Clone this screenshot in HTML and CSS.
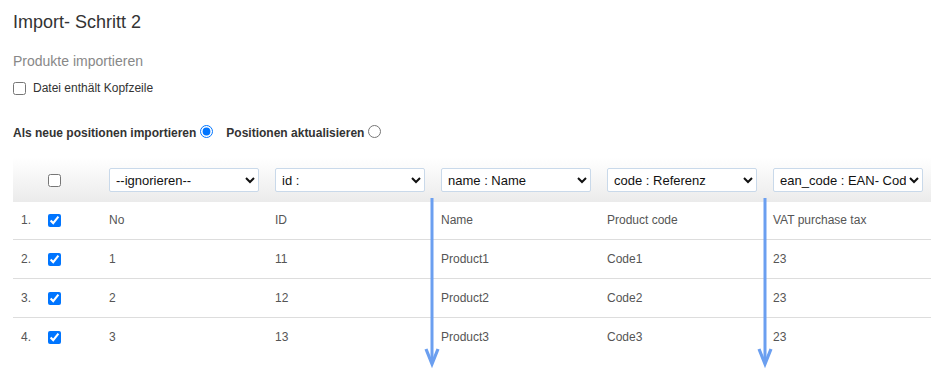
FILE: index.html
```html
<!DOCTYPE html>
<html>
<head>
    <title>Import</title>
    <link rel="stylesheet" href="styles.css">
</head>
<body>
    <div class="page">
        <h1 class="title">Import- Schritt 2</h1>
        <h2 class="subtitle">Produkte importieren</h2>
        <label class="headline"><input type="checkbox"> Datei enthält Kopfzeile</label>
        <div class="mode">
            <label>Als neue positionen importieren <input type="radio" name="mode" checked></label>
            <label>Positionen aktualisieren <input type="radio" name="mode"></label>
        </div>
        <div class="grid-wrap">
            <table class="grid">
                <thead>
                    <tr>
                        <th class="num"></th>
                        <th class="chk"><input type="checkbox"></th>
                        <th><select><option>--ignorieren--</option></select></th>
                        <th><select><option>id :</option></select></th>
                        <th><select><option>name : Name</option></select></th>
                        <th><select><option>code : Referenz</option></select></th>
                        <th><select><option>ean_code : EAN- Code</option></select></th>
                    </tr>
                </thead>
                <tbody>
                    <tr>
                        <td class="num">1.</td>
                        <td class="chk"><input type="checkbox" checked></td>
                        <td>No</td><td>ID</td><td>Name</td><td>Product code</td><td>VAT purchase tax</td>
                    </tr>
                    <tr>
                        <td class="num">2.</td>
                        <td class="chk"><input type="checkbox" checked></td>
                        <td>1</td><td>11</td><td>Product1</td><td>Code1</td><td>23</td>
                    </tr>
                    <tr>
                        <td class="num">3.</td>
                        <td class="chk"><input type="checkbox" checked></td>
                        <td>2</td><td>12</td><td>Product2</td><td>Code2</td><td>23</td>
                    </tr>
                    <tr>
                        <td class="num">4.</td>
                        <td class="chk"><input type="checkbox" checked></td>
                        <td>3</td><td>13</td><td>Product3</td><td>Code3</td><td>23</td>
                    </tr>
                </tbody>
            </table>
            <svg class="hint hint-name" viewBox="0 0 16 170">
                <path d="M8 0V165" stroke="#6b9ff0" stroke-width="3" fill="none"/>
                <path d="M2 151L8 166L14 151" stroke="#6b9ff0" stroke-width="3.2" fill="none"/>
            </svg>
            <svg class="hint hint-ean" viewBox="0 0 16 170">
                <path d="M8 0V165" stroke="#6b9ff0" stroke-width="3" fill="none"/>
                <path d="M2 151L8 166L14 151" stroke="#6b9ff0" stroke-width="3.2" fill="none"/>
            </svg>
        </div>
    </div>
</body>
</html>
```

FILE: styles.css
```css
*{
    margin: 0;
    padding: 0;
    box-sizing: border-box;
}
html,body{
    height: 100%;
}
body{
    font-family: "Liberation Sans", Arial, sans-serif;
    color: #333;
    background: #fff;
    overflow: hidden;
}
.page{
    padding: 11px 0 0 13px;
    width: 931px;
    min-height: 376px;
}
.title{
    font-size: 18px;
    font-weight: normal;
    color: #333;
    line-height: 22px;
}
.subtitle{
    font-size: 14px;
    font-weight: normal;
    color: #888;
    line-height: 18px;
    margin-top: 19px;
}
.headline{
    display: flex;
    align-items: center;
    gap: 7px;
    font-size: 12px;
    margin-top: 11px;
    height: 14px;
}
.headline input{
    width: 13px;
    height: 13px;
    margin: 0;
}
.mode{
    display: flex;
    gap: 13px;
    font-size: 12px;
    font-weight: bold;
    margin-top: 30px;
    height: 16px;
    align-items: center;
}
.mode label{
    display: flex;
    align-items: center;
    gap: 4px;
}
.mode input{
    width: 13px;
    height: 13px;
    margin: 0 0 3px 0;
}
.grid-wrap{
    position: relative;
    margin-top: 17px;
}
.grid{
    border-collapse: collapse;
    font-size: 12px;
    color: #555;
    table-layout: fixed;
    width: 918px;
}
.grid thead tr{
    background: linear-gradient(#fff, #ebebeb);
    height: 44px;
}
.grid th{
    text-align: left;
    font-weight: normal;
    padding: 0 8px;
    width: 166px;
}
.grid td{
    padding: 0 8px;
    height: 39px;
    border-top: 1px solid #ddd;
}
.grid tbody tr:first-child td{
    border-top: 0;
    height: 37px;
}
.grid .num{
    width: 27px;
    padding-left: 8px;
}
.grid .chk{
    width: 61px;
}
.grid input[type=checkbox]{
    width: 13px;
    height: 13px;
    margin: 0;
    vertical-align: middle;
}
.grid select{
    width: 150px;
    height: 24px;
    font-family: "Liberation Sans", Arial, sans-serif;
    font-size: 13px;
    color: #111;
    border: 1px solid #c9d9ea;
    border-radius: 2px;
    background: #fff;
    padding-left: 2px;
}
.hint{
    position: absolute;
    top: 40px;
    display: block;
    width: 16px;
    height: 170px;
    overflow: visible;
}
.hint-name{
    left: 411px;
}
.hint-ean{
    left: 744px;
}
```
